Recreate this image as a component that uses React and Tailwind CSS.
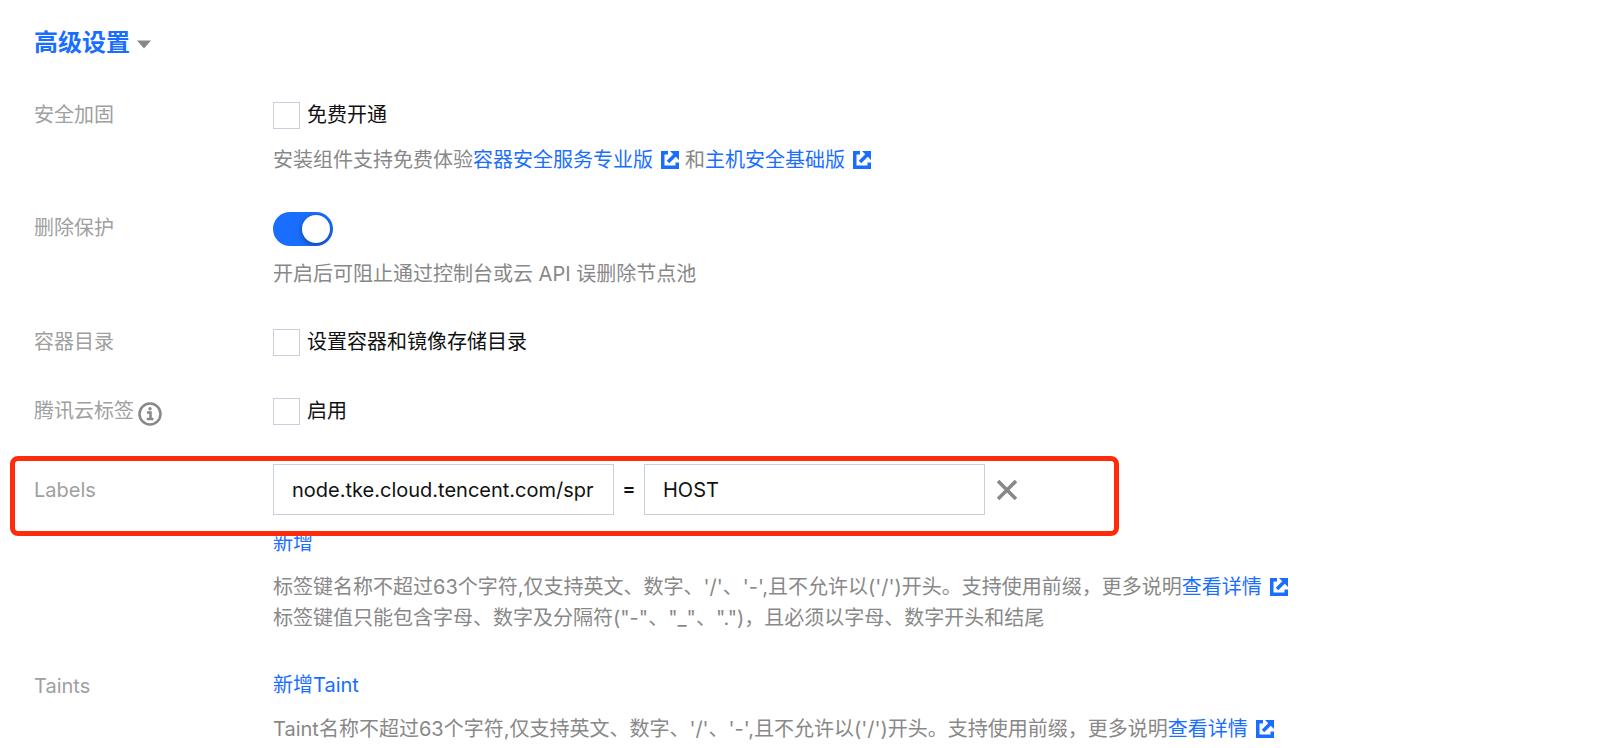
import { useState } from 'react';

function ExternalIcon() {
  return (
    <svg viewBox="0 0 18 18" fill="none" stroke="currentColor" className="mr-[6px] ml-2 inline-block size-[18px] align-[-2px]">
      <path d="M7 1.75H1.75v14.5h14.5V11.5" strokeWidth="3.5" />
      <path d="M7 11L14 4" strokeWidth="3.5" />
      <path d="M9 0h9v9z" fill="currentColor" stroke="none" />
    </svg>
  );
}

function ExternalLink({ children }) {
  return (
    <a href="#" className="text-[#1a6eff]">
      {children}
      <ExternalIcon />
    </a>
  );
}

function Row({ label, htmlFor, icon, children }) {
  return (
    <div className="flex items-start">
      <div className="flex w-[239px] shrink-0 items-center leading-[33px] text-[#a0a0a0]">
        <label htmlFor={htmlFor}>{label}</label>
        {icon}
      </div>
      <div className="flex min-w-0 flex-1 flex-col items-start gap-[13px]">{children}</div>
    </div>
  );
}

function Checkbox({ id, children }) {
  return (
    <label htmlFor={id} className="flex items-center gap-[7px] leading-[33px] text-[#111111]">
      <input id={id} type="checkbox" className="size-[27px] appearance-none border border-[#c8d0dc] bg-white checked:bg-[#1a6eff]" />
      {children}
    </label>
  );
}

function Help({ children }) {
  return <p className="text-[#888888]">{children}</p>;
}

export default function App() {
  const [open, setOpen] = useState(true);
  const [labelKey, setLabelKey] = useState('node.tke.cloud.tencent.com/spr');
  const [labelValue, setLabelValue] = useState('HOST');

  return (
    <main className="min-h-screen bg-white px-[34px] pt-[25px] font-['Inter','Noto_Sans_CJK_SC',sans-serif] text-[20px] leading-[31px]">
      <button type="button" onClick={() => setOpen(!open)} className="flex items-center gap-[7px] text-[24px] leading-[36px] font-bold text-[#1a6eff]">
        高级设置
        <svg viewBox="0 0 14 8" className="mt-0.5 h-[9px] w-[14px] fill-[#888888]">
          <path d="M0 0h14L7 8z" />
        </svg>
      </button>
      {open && (
        <div className="mt-[38px] flex flex-col gap-9">
          <Row label="安全加固" htmlFor="security">
            <Checkbox id="security">免费开通</Checkbox>
            <Help>
              安装组件支持免费体验<ExternalLink>容器安全服务专业版</ExternalLink>和<ExternalLink>主机安全基础版</ExternalLink>
            </Help>
          </Row>

          <Row label="删除保护" htmlFor="protection">
            <input
              id="protection"
              type="checkbox"
              role="switch"
              defaultChecked
              className="flex h-[34px] w-[60px] appearance-none items-center overflow-hidden rounded-full bg-[#cfd5de] px-[3px] before:size-7 before:rounded-full before:bg-white before:shadow-[0_2px_6px_rgba(0,0,0,0.4)] checked:justify-end checked:bg-[#1a6eff]"
            />
            <Help>开启后可阻止通过控制台或云 API 误删除节点池</Help>
          </Row>

          <Row label="容器目录" htmlFor="directory">
            <Checkbox id="directory">设置容器和镜像存储目录</Checkbox>
          </Row>

          <Row
            label="腾讯云标签"
            htmlFor="tags"
            icon={
              <svg viewBox="0 0 24 24" fill="none" stroke="#888888" className="mt-1 ml-1 size-6">
                <circle cx="12" cy="12" r="10.5" strokeWidth="2.5" />
                <path d="M9 10.5h3.5V17M8.8 17h6.6" strokeWidth="2.5" />
                <circle cx="12" cy="6.8" r="1.7" fill="#888888" stroke="none" />
              </svg>
            }
          >
            <Checkbox id="tags">启用</Checkbox>
          </Row>

          <div className="relative">
            {/* highlight frame, laid over the first label pair */}
            <div className="pointer-events-none absolute -top-2 -left-6 h-20 w-[1109px] rounded-[8px] border-5 border-[#ff2b0a]" />
            <div className="flex items-start">
              <label htmlFor="label-key" className="w-[239px] shrink-0 leading-[53px] text-[#a0a0a0]">
                Labels
              </label>
              <div className="flex min-w-0 flex-1 flex-col items-start gap-[13px]">
                <div className="flex items-center text-[#111111]">
                  <input
                    id="label-key"
                    type="text"
                    value={labelKey}
                    onChange={(e) => setLabelKey(e.target.value)}
                    className="h-[51px] w-[341px] border border-[#c8d0dc] px-[18px]"
                  />
                  <span className="w-[30px] text-center font-medium">=</span>
                  <input
                    type="text"
                    aria-label="Label value"
                    value={labelValue}
                    onChange={(e) => setLabelValue(e.target.value)}
                    className="h-[51px] w-[341px] border border-[#c8d0dc] px-[18px]"
                  />
                  <button type="button" aria-label="删除" className="ml-3">
                    <svg viewBox="0 0 20 20" fill="none" stroke="#888888" strokeWidth="3.6" className="size-5">
                      <path d="M1 1l18 18M19 1L1 19" />
                    </svg>
                  </button>
                </div>
                <button type="button" className="text-[#1a6eff]">
                  新增
                </button>
                <Help>
                  标签键名称不超过63个字符,仅支持英文、数字、'/'、'-',且不允许以('/')开头。支持使用前缀，更多说明<ExternalLink>查看详情</ExternalLink>
                  <br />
                  标签键值只能包含字母、数字及分隔符("-"、"_"、".")，且必须以字母、数字开头和结尾
                </Help>
              </div>
            </div>
          </div>

          <Row label="Taints" htmlFor="add-taint">
            <button id="add-taint" type="button" className="text-[#1a6eff]">
              新增Taint
            </button>
            <Help>
              Taint名称不超过63个字符,仅支持英文、数字、'/'、'-',且不允许以('/')开头。支持使用前缀，更多说明<ExternalLink>查看详情</ExternalLink>
            </Help>
          </Row>
        </div>
      )}
    </main>
  );
}
